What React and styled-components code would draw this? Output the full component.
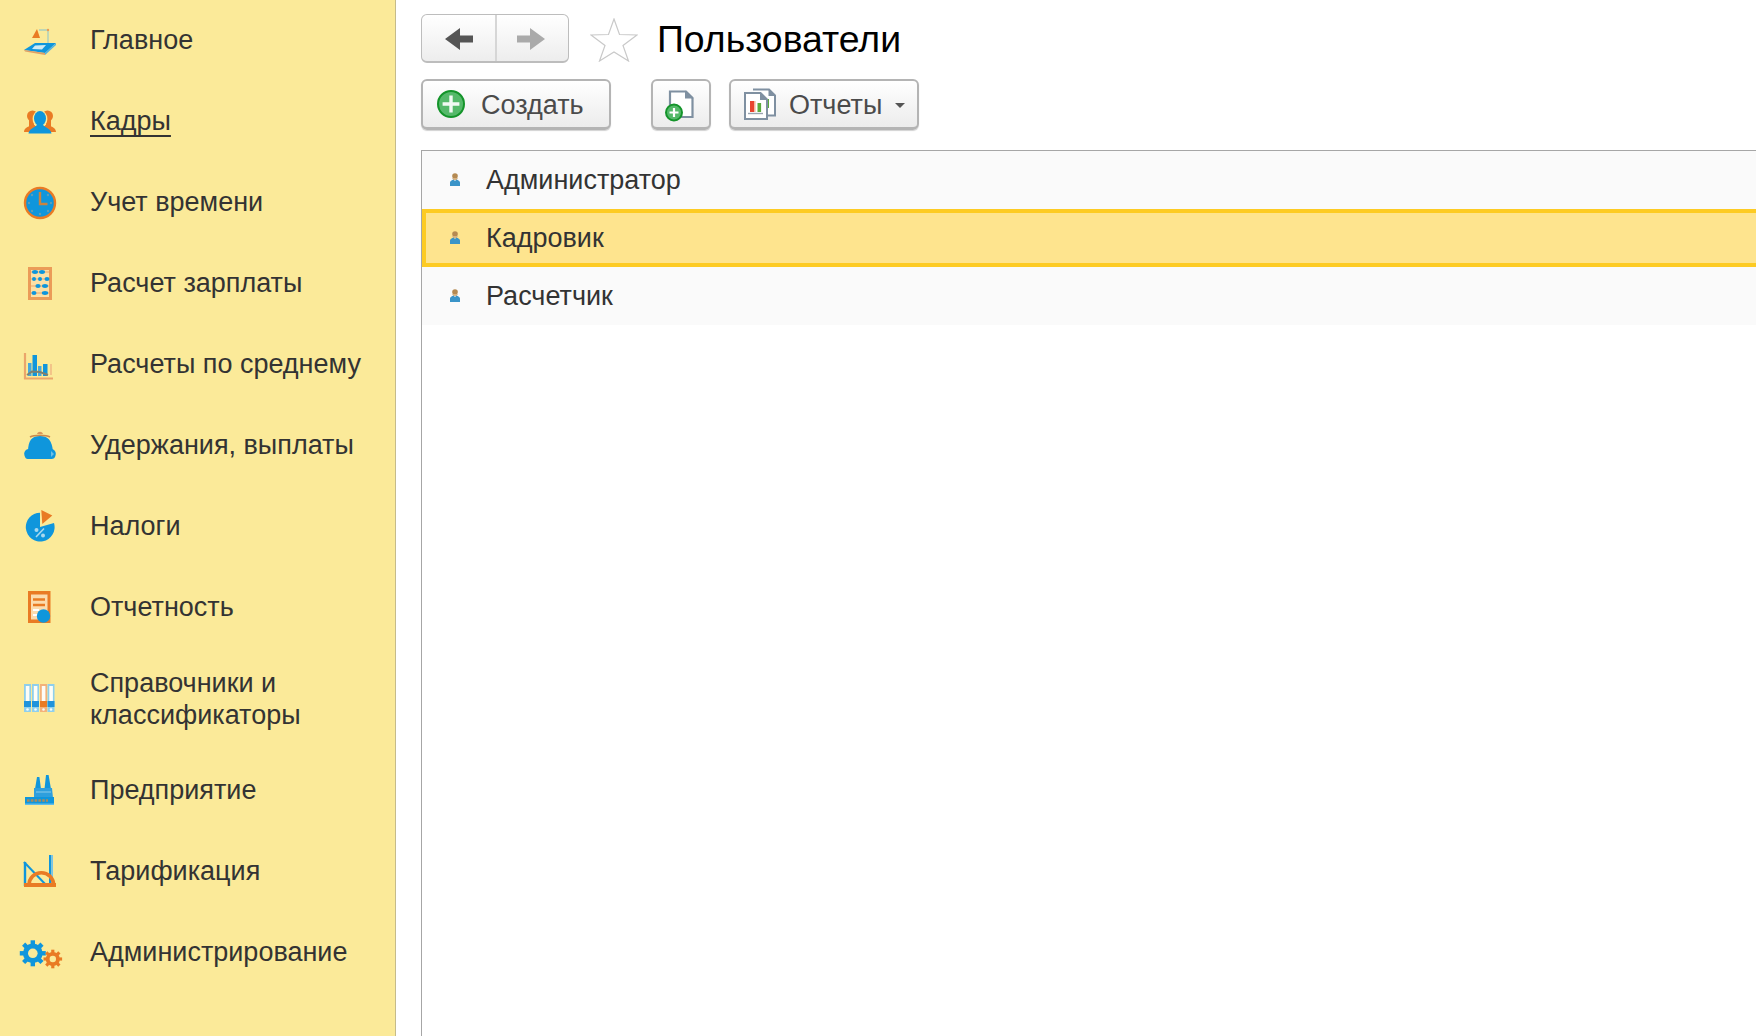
import React from 'react';
import styled, { createGlobalStyle } from 'styled-components';

const Global = createGlobalStyle`
  html, body { margin: 0; padding: 0; height: 100%; background: #fff; }
  body { font-family: "Liberation Sans", Arial, sans-serif; color: #333; overflow: hidden; }
  #root { height: 100%; }
`;

const Page = styled.div`
  display: flex;
  height: 1036px;
  width: 1756px;
  overflow: hidden;
`;

const Sidebar = styled.nav`
  width: 395px;
  flex: none;
  background: #fbea99;
  border-right: 1px solid #c5bb8a;
`;

const NavItem = styled.div`
  display: flex;
  align-items: center;
  min-height: 81px;
  padding: 19px 0;
  box-sizing: border-box;
`;

const NavIcon = styled.span`
  width: 90px;
  flex: none;
  display: flex;
  justify-content: center;
  padding-right: 10px;
  box-sizing: border-box;
  svg { display: block; overflow: visible; filter: blur(0.45px); }
`;

const NavLabel = styled.span`
  font-size: 27px;
  line-height: 32px;
  color: #333;
  margin-top: ${p => (p.$two ? 0 : -2)}px;
  text-decoration: ${p => (p.$active ? 'underline' : 'none')};
  text-decoration-thickness: 2px;
  text-underline-offset: 5px;
  text-decoration-skip-ink: none;
`;

const Main = styled.main`
  flex: 1;
  min-width: 0;
  padding: 14px 0 0 25px;
  display: flex;
  flex-direction: column;
`;

const TitleBar = styled.div`
  display: flex;
  align-items: center;
  height: 49px;
`;

const NavGroup = styled.div`
  display: flex;
  width: 148px;
  height: 49px;
  box-sizing: border-box;
  border: 1px solid #bdbdbd;
  border-bottom-width: 2px;
  border-radius: 6px;
  background: linear-gradient(#fff, #ededed);
`;

const NavArrow = styled.div`
  flex: ${p => (p.$first ? '0 0 73px' : '1')};
  display: flex;
  align-items: center;
  justify-content: center;
  padding: 2px ${p => (p.$first ? 0 : 3)}px 0 0;
  box-sizing: border-box;
  & + & { border-left: 2px solid #d6d6d6; }
`;

const Star = styled.svg`
  margin: 0 19px 0 21px;
  flex: none;
  position: relative;
  top: 1px;
`;

const Title = styled.h1`
  margin: 2px 0 0;
  font-size: 37.4px;
  font-weight: 400;
  line-height: 49px;
  color: #000;
`;

const Toolbar = styled.div`
  display: flex;
  align-items: flex-start;
  margin-top: 16px;
  height: 51px;
`;

const ToolButton = styled.div`
  display: flex;
  align-items: center;
  width: ${p => p.$w}px;
  height: 51px;
  margin-left: ${p => p.$ml || 0}px;
  box-sizing: border-box;
  padding-left: ${p => p.$pl || 0}px;
  border: 2px solid #b4b4b4;
  border-bottom-width: 3px;
  border-radius: 6px;
  background: linear-gradient(#fff, #ececec);
  box-shadow: 0 1px 1px rgba(0, 0, 0, 0.18);
  font-size: 27px;
  color: #4b4b4b;
  svg { flex: none; overflow: visible; }
`;

const ButtonText = styled.span`
  margin-left: ${p => p.$ml}px;
  margin-top: 2px;
`;

const Caret = styled.span`
  margin-left: 13px;
  margin-top: 2px;
  width: 0;
  height: 0;
  border-left: 5px solid transparent;
  border-right: 5px solid transparent;
  border-top: 5px solid #555;
`;

const List = styled.div`
  flex: 1;
  margin-top: 20px;
  border-top: 1px solid #a6a6a6;
  border-left: 1px solid #a6a6a6;
`;

const Row = styled.div`
  display: flex;
  align-items: center;
  height: 58px;
  box-sizing: border-box;
  padding-left: ${p => (p.$selected ? 24 : 28)}px;
  background: ${p => (p.$selected ? '#fee48e' : '#fafafa')};
  border: ${p => (p.$selected ? '4px solid #fdcb23' : 'none')};
  border-right: none;
  font-size: 27px;
  color: #333;
  svg { margin-top: -2px; flex: none; }
`;

const RowText = styled.span`
  margin-left: 26px;
`;

const B = '#0f96dc';
const O = '#e97b24';
const BG = '#fbea99';

const Desk = () => (
  <svg width="32" height="32" viewBox="0 0 32 32">
    <path d="M13 4 L8 13 L16 13 Z" fill={O} />
    <path d="M15 5 H24 V18" fill="none" stroke="#a9cfc0" strokeWidth="1.4" />
    <circle cx="24" cy="5" r="1.2" fill="#ee9a55" />
    <path d="M0 25 L11 18 L32 18 L21 28 Z" fill={B} />
    <path d="M11 20.5 L22 20 L18 24.5 L8 24 Z" fill="#cfeaf3" />
    <path d="M0 25 L21 28 L21 30 L1 26.5 Z" fill="#dfa066" />
    <path d="M21 28 L32 18 V20 L21 30 Z" fill="#4fb1e2" />
  </svg>
);
const People = () => (
  <svg width="32" height="32" viewBox="0 0 32 32">
    <circle cx="8.5" cy="10" r="5.5" fill={O} />
    <circle cx="23.5" cy="10" r="5.5" fill={O} />
    <rect x="5" y="11" width="5" height="10" fill={O} />
    <rect x="22" y="11" width="5" height="10" fill={O} />
    <path d="M0 26 C0 22 4 21 7 19 H25 C28 21 32 22 32 26 Z" fill={O} />
    <ellipse cx="16" cy="13" rx="7.4" ry="9" fill={BG} />
    <ellipse cx="16" cy="12.5" rx="6" ry="7.5" fill={B} />
    <path d="M4.5 27.5 C5 23 10 22 13 19 H19 C22 22 27 23 27.5 27.5 Z" fill={B} />
  </svg>
);
const Clock = () => (
  <svg width="32" height="32" viewBox="0 0 32 32">
    <circle cx="16" cy="16" r="15" fill={B} stroke={O} strokeWidth="2.4" />
    <path d="M16 5 V17 H23.5" fill="none" stroke="#c98340" strokeWidth="2.4" />
    <g fill="#5c9db8">
      <circle cx="16" cy="27" r="1.2" />
      <circle cx="5" cy="16" r="1.2" /><circle cx="27" cy="16" r="1.2" />
      <circle cx="8" cy="8" r="1.2" /><circle cx="24" cy="8" r="1.2" />
      <circle cx="8" cy="24" r="1.2" /><circle cx="24" cy="24" r="1.2" />
    </g>
  </svg>
);
const Abacus = () => (
  <svg width="32" height="32" viewBox="0 0 32 32">
    <rect x="5.5" y="0.5" width="21" height="30" fill="#fde0a6" stroke="#eb9c58" strokeWidth="3" />
    {[4, 11, 18, 25].map(y => (
      <path key={y} d={`M7 ${y} H25`} stroke="#eca56a" strokeWidth="1" />
    ))}
    <g fill={B}>
      <ellipse cx="11" cy="4" rx="3" ry="1.9" /><ellipse cx="18" cy="4" rx="3" ry="1.9" />
      <ellipse cx="10" cy="11" rx="2" ry="1.9" /><ellipse cx="16" cy="11" rx="2" ry="1.9" /><ellipse cx="23" cy="11" rx="2.5" ry="1.9" />
      <ellipse cx="14" cy="18" rx="2.6" ry="1.9" /><ellipse cx="21" cy="18" rx="3" ry="1.9" />
      <ellipse cx="10" cy="25" rx="2.5" ry="1.9" /><ellipse cx="21" cy="25" rx="3.2" ry="1.9" />
    </g>
  </svg>
);
const Bars = () => (
  <svg width="32" height="32" viewBox="0 0 32 32">
    <path d="M1 4 V29.5 H29" fill="none" stroke="#eba66b" strokeWidth="2.2" />
    <path d="M27 15 V26" stroke="#f1bb85" strokeWidth="1.6" />
    <rect x="4" y="14" width="3.5" height="13" fill="#46a9dc" />
    <rect x="8.5" y="6" width="4.5" height="21" fill={B} />
    <rect x="14" y="17" width="3.5" height="10" fill="#46a9dc" />
    <rect x="19" y="15" width="4.5" height="12" fill={B} />
    <path d="M3 26 L8 22.5 L16 23 L24 26" fill="none" stroke="#80816f" strokeWidth="2" />
  </svg>
);
const Purse = () => (
  <svg width="32" height="32" viewBox="0 0 32 32">
    <path d="M13 4 C14 1 18 1 19 4 Z" fill="#d9965a" />
    <path d="M4 22 C4 10 8 6 16 6 C24 6 28 10 29 22 Z" fill={B} />
    <path d="M6 7 C10 4.6 22 4.6 26 7" fill="none" stroke="#cd8a4c" strokeWidth="1.6" />
    <path d="M1 27 C-1 23 1 19 5 19 H27 C31 19 33 23 31 27 C30 29 28 29 26 29 H5 C3 29 2 29 1 27 Z" fill={B} />
    <path d="M27 21 L30 24 L27 27 Z" fill="#6dbfe6" />
  </svg>
);
const Pie = () => (
  <svg width="32" height="32" viewBox="0 0 32 32">
    <path d="M16 16 L30 12 A14.4 14.4 0 1 1 16 1.7 Z" fill={B} />
    <path d="M17.3 -1 L28.3 4.5 L18.3 13 Z" fill={O} />
    <path d="M20 17.5 L12 26" stroke="#a9d9ef" strokeWidth="1.6" />
    <circle cx="12.5" cy="19" r="2" fill="#a9d9ef" />
    <circle cx="19" cy="24.5" r="2" fill="#a9d9ef" />
  </svg>
);
const Report = () => (
  <svg width="32" height="32" viewBox="0 0 32 32">
    <rect x="4" y="-1" width="22.5" height="32" fill={O} />
    <rect x="7" y="2.5" width="16.5" height="25" fill="#fbdcae" />
    <path d="M9 7.5 H21 M9 13 H21" stroke={O} strokeWidth="2.4" />
    <path d="M9 18 H15 M9 23 H13" stroke="#fff" strokeWidth="2" />
    <circle cx="19.5" cy="24" r="6.7" fill={B} />
  </svg>
);
const Binders = () => (
  <svg width="32" height="32" viewBox="0 0 32 32">
    {[0, 8, 16, 23.5].map((x, i) => {
      const main = i === 2 ? O : '#1f93dc';
      const soft = i === 2 ? '#f3b27a' : '#8fcfec';
      return (
        <g key={x}>
          <rect x={x} y="1" width="7" height="28" fill={soft} />
          <rect x={x + 1.8} y="3" width="3.6" height="15" fill="#fdfdf8" />
          <rect x={x} y="18" width="7" height="6" fill={main} />
          <circle cx={x + 3.5} cy="26.5" r="1.3" fill="#f4fbfd" />
        </g>
      );
    })}
  </svg>
);
const Factory = () => (
  <svg width="32" height="32" viewBox="0 0 32 32">
    <path d="M13 2 H15.4 L17 14 H11 Z M22 0 H24.6 L27 14 H20.5 Z" fill={B} />
    <path d="M10 23 V13 H28 L29 23 Z" fill="#2e9fdd" />
    <path d="M12 17 H27" stroke="#7cc6ea" strokeWidth="1.2" />
    <rect x="1" y="22" width="29" height="8" fill={B} />
    <path d="M3 25.5 H24" stroke="#a68a5e" strokeWidth="2.4" strokeDasharray="2.6 1.2" />
    <rect x="1" y="28.5" width="29" height="1.5" fill="#63bde7" />
  </svg>
);
const Protractor = () => (
  <svg width="32" height="32" viewBox="0 0 32 32">
    <rect x="25" y="-1" width="2.4" height="32" fill={B} />
    <rect x="27.4" y="-1" width="1.6" height="32" fill="#79c4e8" />
    <path d="M1 6 V30" stroke={B} strokeWidth="2.4" />
    <path d="M0 6 L23 30" stroke={B} strokeWidth="2" />
    <path d="M5 29 A12.3 12.3 0 0 1 29.6 29" fill="none" stroke={O} strokeWidth="3.6" />
    <rect x="0" y="27" width="32" height="4" fill={O} />
  </svg>
);

const Gear = ({ cx, cy, r, color, hole }) => (
  <g>
    {[0, 45, 90, 135].map(a => (
      <rect
        key={a}
        x={cx - r * 0.17}
        y={cy - r}
        width={r * 0.34}
        height={r * 2}
        fill={color}
        transform={`rotate(${a} ${cx} ${cy})`}
      />
    ))}
    <circle cx={cx} cy={cy} r={r * 0.76} fill={color} />
    <circle cx={cx} cy={cy} r={hole} fill={BG} />
  </g>
);
const Gears = () => (
  <svg width="43" height="32" viewBox="0 0 43 32">
    <Gear cx={13.8} cy={16.3} r={13} color={B} hole={4.8} />
    <Gear cx={33.8} cy={22} r={9.3} color={O} hole={3.2} />
  </svg>
);

const Person = () => (
  <svg width="10" height="13" viewBox="0 0 10 13">
    <circle cx="5" cy="3" r="2.8" fill="#b58a52" />
    <path d="M2 5 H8 L6.5 7 H3.5 Z" fill="#d8b280" />
    <path d="M0 13 V9.5 C0 8 2 7 3.5 6.5 L5 8 L6.5 6.5 C8 7 10 8 10 9.5 V13 Z" fill="#3a94c8" />
  </svg>
);

const GreenPlus = () => (
  <svg width="30" height="30" viewBox="0 0 30 30">
    <circle cx="15" cy="15" r="13" fill="#55b96a" stroke="#14942a" strokeWidth="2" />
    <path d="M15 6.6 V23.4 M6.6 15 H23.4" stroke="#fff" strokeWidth="3.4" opacity="0.92" />
  </svg>
);

const NewDoc = () => (
  <svg width="34" height="32" viewBox="0 0 34 32">
    <path d="M5 3.5 H21 L27.5 10 V29 H5 Z" fill="#fff" stroke="#7f90a1" strokeWidth="2.2" />
    <path d="M20 2.5 V10.5 H28.5 Z" fill="#7f90a1" />
    <circle cx="9" cy="24.5" r="8" fill="#55b96a" stroke="#14942a" strokeWidth="2" />
    <path d="M9 20 V29 M4.5 24.5 H13.5" stroke="#fff" strokeWidth="2.2" />
  </svg>
);

const ReportDocs = () => (
  <svg width="33" height="32" viewBox="0 0 33 32">
    <path d="M10 1.5 H26 L32 7.5 V27.5 H22" fill="#fff" stroke="#7f90a1" strokeWidth="2" />
    <path d="M25.5 1 V8 H32 Z" fill="#7f90a1" />
    <rect x="23" y="11" width="3" height="9" fill="#5aab3e" />
    <path d="M2 5 H17.5 L24 11.5 V31 H2 Z" fill="#fff" stroke="#7f90a1" strokeWidth="2" />
    <path d="M17 4 V12 H25 Z" fill="#7f90a1" />
    <rect x="7" y="13" width="4" height="11" fill="#e8432f" />
    <rect x="11" y="13" width="1.6" height="11" fill="#f3b8a0" />
    <rect x="14.5" y="15" width="3.6" height="9" fill="#5aab3e" />
    <path d="M5 25.5 H20" stroke="#9aa5b0" strokeWidth="1.4" />
  </svg>
);

const items = [
  ['Главное', Desk],
  ['Кадры', People, true],
  ['Учет времени', Clock],
  ['Расчет зарплаты', Abacus],
  ['Расчеты по среднему', Bars],
  ['Удержания, выплаты', Purse],
  ['Налоги', Pie],
  ['Отчетность', Report],
  [<>Справочники и<br />классификаторы</>, Binders, false, true],
  ['Предприятие', Factory],
  ['Тарификация', Protractor],
  ['Администрирование', Gears],
];

const users = ['Администратор', 'Кадровик', 'Расчетчик'];

export default function App() {
  return (
    <Page>
      <Global />
      <Sidebar>
        {items.map(([label, Icon, active, two], i) => (
          <NavItem key={i}>
            <NavIcon><Icon /></NavIcon>
            <NavLabel $active={active} $two={two}>{label}</NavLabel>
          </NavItem>
        ))}
      </Sidebar>
      <Main>
        <TitleBar>
          <NavGroup>
            <NavArrow $first>
              <svg width="28" height="22" viewBox="0 0 28 22"><path d="M0 11 L15 0 V7.5 H28 V14.5 H15 V22 Z" fill="#555" /></svg>
            </NavArrow>
            <NavArrow>
              <svg width="28" height="22" viewBox="0 0 28 22"><path d="M28 11 L13 0 V7.5 H0 V14.5 H13 V22 Z" fill="#aaa" /></svg>
            </NavArrow>
          </NavGroup>
          <Star width="48" height="44" viewBox="0 0 48 44">
            <path d="M24 1 L29.5 16.5 L47 17 L33 27.5 L38.5 43 L24 34 L9.5 43 L15 27.5 L1 17 L18.5 16.5 Z" fill="#fff" stroke="#c9c9c9" strokeWidth="1.2" />
          </Star>
          <Title>Пользователи</Title>
        </TitleBar>
        <Toolbar>
          <ToolButton $w={190} $pl={13}>
            <GreenPlus />
            <ButtonText $ml={15}>Создать</ButtonText>
          </ToolButton>
          <ToolButton $w={60} $ml={40} $pl={12}>
            <NewDoc />
          </ToolButton>
          <ToolButton $w={190} $ml={18} $pl={12}>
            <ReportDocs />
            <ButtonText $ml={13}>Отчеты</ButtonText>
            <Caret />
          </ToolButton>
        </Toolbar>
        <List>
          {users.map(u => (
            <Row key={u} $selected={u === 'Кадровик'}>
              <Person />
              <RowText>{u}</RowText>
            </Row>
          ))}
        </List>
      </Main>
    </Page>
  );
}
